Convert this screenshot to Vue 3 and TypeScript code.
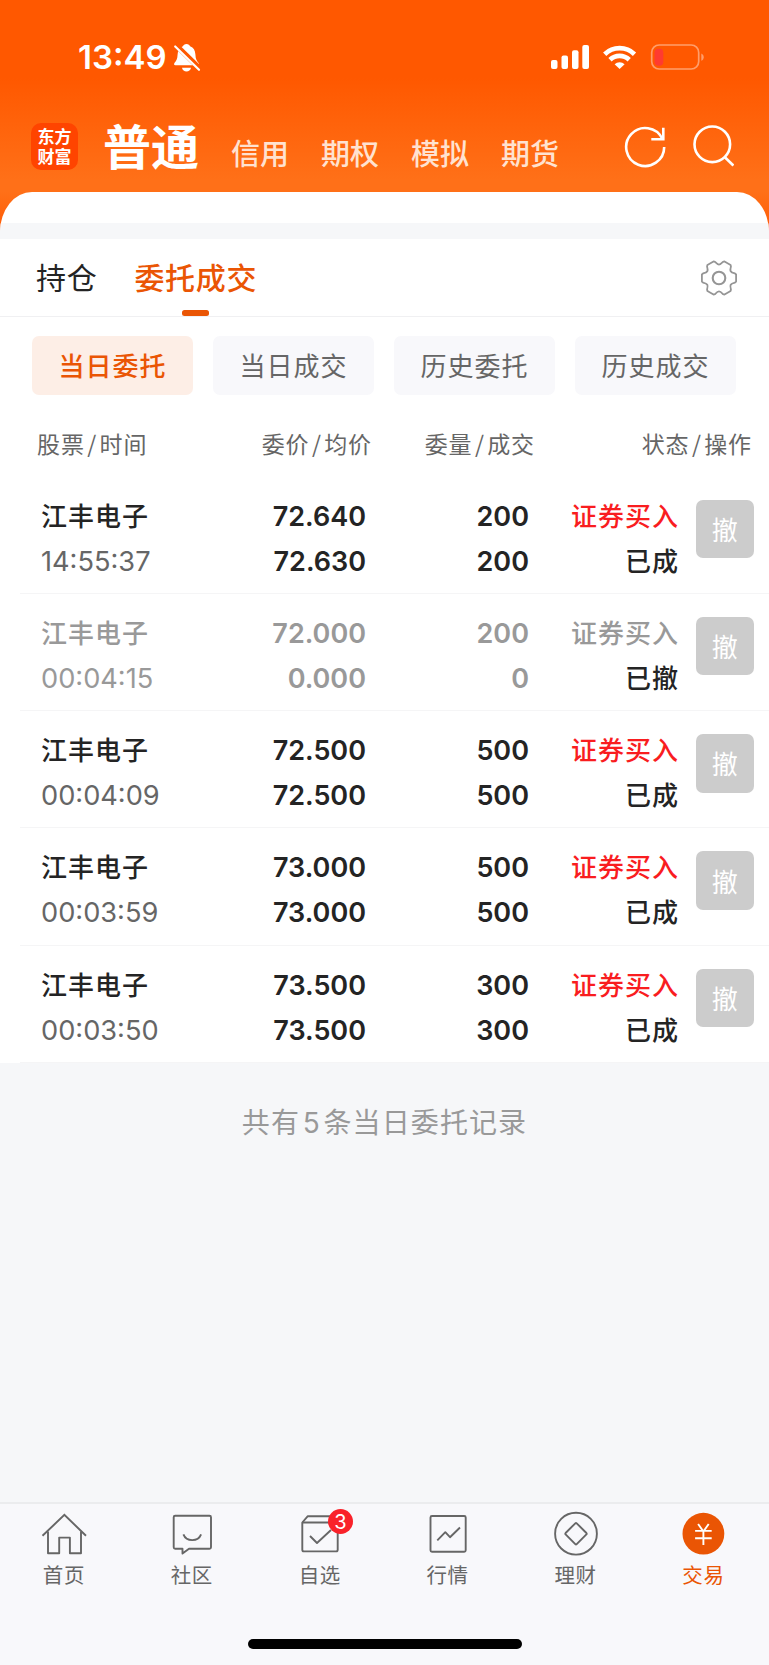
<script setup lang="ts">
interface Order {
  time: string
  price: string
  avg: string
  qty: number
  filled: number
  state: string
  cancelled?: boolean
}

const accounts: string[] = ['信用', '期权', '模拟', '期货']
const filters: string[] = ['当日委托', '当日成交', '历史委托', '历史成交']
const columns: [string, string][] = [
  ['股票', '时间'],
  ['委价', '均价'],
  ['委量', '成交'],
  ['状态', '操作'],
]

const orders: Order[] = [
  { time: '14:55:37', price: '72.640', avg: '72.630', qty: 200, filled: 200, state: '已成' },
  { time: '00:04:15', price: '72.000', avg: '0.000', qty: 200, filled: 0, state: '已撤', cancelled: true },
  { time: '00:04:09', price: '72.500', avg: '72.500', qty: 500, filled: 500, state: '已成' },
  { time: '00:03:59', price: '73.000', avg: '73.000', qty: 500, filled: 500, state: '已成' },
  { time: '00:03:50', price: '73.500', avg: '73.500', qty: 300, filled: 300, state: '已成' },
]

const tabs: { id: string; label: string }[] = [
  { id: 'home', label: '首页' },
  { id: 'community', label: '社区' },
  { id: 'watch', label: '自选' },
  { id: 'market', label: '行情' },
  { id: 'wealth', label: '理财' },
  { id: 'trade', label: '交易' },
]

// Outline of a six-toothed gear centred on the origin.
function gearPath(): string {
  const at = (x: number, y: number, k: number): string => {
    const a = (k * Math.PI) / 3
    const px = x * Math.cos(a) - y * Math.sin(a)
    const py = x * Math.sin(a) + y * Math.cos(a)
    return `${px.toFixed(2)} ${py.toFixed(2)}`
  }
  let d = `M${at(15.9, -4.6, 0)}`
  for (let k = 0; k < 6; k++) {
    d += `L${at(17.1, -3.5, k)}L${at(17.1, 3.5, k)}L${at(15.9, 4.6, k)}`
    d += `C${at(11.2, 5.8, k)} ${at(11.2, -5.8, k + 1)} ${at(15.9, -4.6, k + 1)}`
  }
  return d + 'Z'
}
const gear: string = gearPath()
</script>

<template>
  <div class="screen">
    <header class="hero">
      <div class="status">
        <span class="clock">13:49</span>
        <svg class="bell" width="28" height="30" viewBox="0 0 28 30">
          <path d="M13.5 1C15.4 1 16.7 2 17.1 3.3C20.6 4.5 22.2 7.6 22.4 11.5C22.6 16 23.6 17.9 25.4 19.8C26.4 21 26 22.3 24.6 22.3H2.4C1 22.3.6 21 1.6 19.8C3.4 17.9 4.4 16 4.6 11.5C4.8 7.6 6.4 4.5 9.9 3.3C10.3 2 11.6 1 13.5 1Z" fill="#fff" />
          <path d="M9 24.7H18C17.5 27.3 15.7 28.5 13.5 28.5S9.5 27.3 9 24.7Z" fill="#fff" />
          <path d="M2.6 1.8L28 26.6" stroke="#ff5800" stroke-width="5.2" />
          <path d="M2.2 3.5L26 26.8" stroke="#fff" stroke-width="2.2" stroke-linecap="round" />
        </svg>
        <svg class="signal" width="154" height="30" viewBox="550 42 154 30">
          <g fill="#fff">
            <rect x="551" y="60" width="6.5" height="9" rx="2" />
            <rect x="561.5" y="55.5" width="6.5" height="13.5" rx="2" />
            <rect x="572" y="50.3" width="6.5" height="18.7" rx="2" />
            <rect x="582.3" y="45" width="6.7" height="24" rx="2" />
            <path d="M619.6 69L614.6 64.2A7.4 7.4 0 0 1 624.6 64.2Z" />
          </g>
          <g fill="none" stroke="#fff" stroke-width="4.7">
            <path d="M604.7 54.2A21.5 21.5 0 0 1 634.5 54.2" />
            <path d="M610 59.8A13.8 13.8 0 0 1 629.2 59.8" />
          </g>
          <rect x="651.7" y="45" width="47" height="24" rx="7.5" fill="none" stroke="#ff9e6b" stroke-width="1.7" />
          <rect x="654.5" y="48.7" width="8.8" height="17" rx="4" fill="#ff3b30" />
          <path d="M701.3 53.5C704.5 54.8 704.5 59.5 701.3 60.8Z" fill="#ff9e6b" />
        </svg>
      </div>
      <nav class="accounts">
        <div class="logo"><span>东方</span><span>财富</span></div>
        <strong class="current">普通</strong>
        <span v-for="name in accounts" :key="name" class="account">{{ name }}</span>
        <svg class="tools" width="110" height="46" viewBox="624 124 110 46" fill="none" stroke="#fff" stroke-width="2.6">
          <path d="M664.2 147A19 19 0 1 1 662.3 138.7" />
          <path d="M663.3 127.7V139.3H651.3" />
          <circle cx="712.3" cy="144.3" r="17.8" />
          <path d="M724.6 157L733.4 165.6" />
        </svg>
      </nav>
    </header>

    <main class="sheet">
      <div class="strip"></div>
      <div class="tabs">
        <span class="tab">持仓</span>
        <span class="tab active">委托成交</span>
        <svg class="gear" width="38" height="38" viewBox="-19 -19 38 38" fill="none" stroke="#959595" stroke-width="1.8" stroke-linejoin="round">
          <path :d="gear" />
          <circle r="6.3" stroke-width="2.1" />
        </svg>
      </div>

      <div class="filters">
        <button v-for="(f, i) in filters" :key="f" type="button" class="chip" :class="{ on: i === 0 }">{{ f }}</button>
      </div>

      <div class="grid head">
        <span v-for="c in columns" :key="c[0]">{{ c[0] }}<i>/</i>{{ c[1] }}</span>
      </div>

      <section v-for="o in orders" :key="o.time" class="grid row" :class="{ dim: o.cancelled }">
        <div class="cell stock"><span class="name">江丰电子</span><span class="time">{{ o.time }}</span></div>
        <div class="cell num"><span>{{ o.price }}</span><span>{{ o.avg }}</span></div>
        <div class="cell num"><span>{{ o.qty }}</span><span>{{ o.filled }}</span></div>
        <div class="cell deal"><span class="side">证券买入</span><span class="state">{{ o.state }}</span></div>
        <button type="button" class="cancel">撤</button>
      </section>
    </main>

    <p class="summary">共有<i>5</i>条当日委托记录</p>

    <footer class="dock">
      <a v-for="t in tabs" :key="t.id" class="item" :class="{ selected: t.id === 'trade' }">
        <svg class="icon" width="46" height="46" viewBox="0 0 46 46" fill="none" stroke="#666" stroke-width="1.9" stroke-linejoin="round">
          <template v-if="t.id === 'home'">
            <path d="M1.5 24.7L23.4 3.9L45 24.7" stroke-linejoin="miter" />
            <path d="M7 20.5V42.2H18.2V26.6H28.9V42.2H40V20.5" />
          </template>
          <template v-else-if="t.id === 'community'">
            <path d="M6.2 4.8H40.5Q42 4.8 42 6.3V36.2Q42 37.7 40.5 37.7H20L13.5 42.6V37.7H6.2Q4.7 37.7 4.7 36.2V6.3Q4.7 4.8 6.2 4.8Z" />
            <path d="M14.4 23.3C17.5 31 29 31 32.1 23.3" />
          </template>
          <template v-else-if="t.id === 'watch'">
            <path d="M5.3 11.5L10.6 5.3H35.5L40.7 11.5V38.8Q40.7 40.4 39.1 40.4H6.9Q5.3 40.4 5.3 38.8Z" />
            <path d="M5.3 11.5H40.7" />
            <path d="M13 25L20 32L34 19" />
          </template>
          <template v-else-if="t.id === 'market'">
            <rect x="5.5" y="5" width="35.2" height="35.7" rx="1.5" />
            <path d="M12.3 29.3L20.3 21.2L25 26.2L35 16.5" />
          </template>
          <template v-else-if="t.id === 'wealth'">
            <circle cx="23" cy="22.7" r="20.9" />
            <path d="M23.7 12.3L33.4 22Q34 22.7 33.4 23.4L23.7 33.1Q23 33.8 22.3 33.1L12.6 23.4Q12 22.7 12.6 22L22.3 12.3Q23 11.6 23.7 12.3Z" />
          </template>
          <template v-else>
            <circle cx="23.4" cy="22.7" r="20.9" fill="#ea5504" stroke="none" />
            <path d="M18.1 13L23.4 20.5L28.7 13M23.4 20.5V34M15.1 19.9H31.7M15.1 27.3H31.7" stroke="#fff" />
          </template>
        </svg>
        <span v-if="t.id === 'watch'" class="badge">3</span>
        <span class="label">{{ t.label }}</span>
      </a>
      <div class="indicator"></div>
    </footer>
  </div>
</template>

<style>
body {
  margin: 0;
  background: #f6f7f9;
}
</style>

<style scoped>
.screen {
  width: 769px;
  height: 1665px;
  display: flex;
  flex-direction: column;
  overflow: hidden;
  background: #f6f7f9;
  font-family: "Noto Sans CJK SC", sans-serif;
  color: #242424;
}
.hero {
  height: 232px;
  flex: none;
  box-sizing: border-box;
  background: linear-gradient(#ff5800 0, #ff5800 78px, #ff7018 180px, #ff7018 192px, #ff5a04 232px);
}
.status {
  display: flex;
  height: 117px;
  padding-left: 78px;
  box-sizing: border-box;
}
.clock {
  width: 95px;
  margin-top: 37px;
  font: 600 33px/40px Inter, sans-serif;
  color: #fff;
}
.bell {
  margin-top: 43px;
}
.signal {
  margin: 42px 0 0 349px;
}
.accounts {
  display: flex;
  align-items: flex-start;
  color: #fff;
  white-space: nowrap;
}
.logo {
  width: 47px;
  height: 47px;
  margin: 6px 25px 0 31px;
  box-sizing: border-box;
  padding-top: 3px;
  border-radius: 10px;
  background: #ff4400;
  display: flex;
  flex-direction: column;
  align-items: center;
  font-size: 17px;
  font-weight: 700;
  line-height: 19.5px;
}
.current {
  width: 128px;
  margin-top: -1px;
  font-size: 48px;
  line-height: 56px;
  font-weight: 700;
}
.account {
  width: 90px;
  margin-top: 15px;
  font-size: 29px;
  line-height: 40px;
  font-weight: 500;
  color: #ffe2d0;
}
.tools {
  margin: 7px 0 0 33px;
}
.sheet {
  margin-top: -40px;
  height: 871px;
  flex: none;
  background: #fff;
  border-radius: 32px 32px 0 0 / 40px 40px 0 0;
  overflow: hidden;
}
.strip {
  height: 15.5px;
  margin-top: 31px;
  background: #f6f7f9;
}
.tabs {
  display: flex;
  height: 78px;
  box-sizing: border-box;
  padding: 0 31px 0 36px;
  border-bottom: 1px solid #f0f0f2;
  font-size: 30px;
  letter-spacing: 0.7px;
}
.tab {
  position: relative;
  line-height: 74px;
  margin-right: 37px;
}
.tab.active {
  color: #ea5504;
  font-weight: 500;
}
.tab.active::after {
  content: "";
  position: absolute;
  left: 48px;
  bottom: 0;
  width: 27px;
  height: 5.5px;
  border-radius: 2.5px;
  background: #ea5504;
}
.gear {
  margin: 20px 0 0 auto;
}
.filters {
  display: flex;
  gap: 20px;
  padding: 19.5px 33px 0 32px;
}
.chip {
  flex: 1;
  height: 59px;
  padding: 0 0 2px;
  border: 0;
  border-radius: 7px;
  background: #f8f8fb;
  font: 400 26px/57px "Noto Sans CJK SC", sans-serif;
  letter-spacing: 1px;
  color: #666;
}
.chip.on {
  background: #fdeee6;
  color: #ea5504;
  font-weight: 500;
}
.grid {
  display: grid;
  grid-template-columns: 200px 152px 163px 150px 1fr;
}
.head {
  height: 81.5px;
  padding: 0 17px 0 20px;
  grid-template-columns: 200px 152px 163px 1fr;
  font-size: 23px;
  letter-spacing: 0.9px;
  line-height: 96px;
  color: #666;
  text-align: right;
}
.head i {
  padding: 0 2.4px;
  font-style: normal;
}
.head span:first-child {
  text-align: left;
  padding-left: 17px;
}
.row {
  height: 117.3px;
  box-sizing: border-box;
  margin-left: 20px;
  border-bottom: 1.5px solid #f5f5f6;
}
.cell {
  display: flex;
  flex-direction: column;
  padding-top: 17px;
  line-height: 45px;
  text-align: right;
}
.stock {
  text-align: left;
  padding-left: 21px;
}
.name,
.deal {
  font-size: 26px;
  font-weight: 500;
  letter-spacing: 1px;
}
.name {
  margin: -2px 0 2px;
}
.deal {
  padding-top: 15px;
  padding-right: 6px;
}
.time {
  font: 400 27.2px/45px Inter, sans-serif;
  color: #666;
}
.num {
  font: 600 27px/45px Inter, sans-serif;
  padding-right: 6px;
}
.side {
  color: #f91d1f;
}
.dim .stock,
.dim .time,
.dim .num,
.dim .side {
  color: #999;
}
.cancel {
  width: 58.5px;
  height: 58.5px;
  margin: 23px 0 0 10.5px;
  padding: 0 0 1px;
  border: 0;
  border-radius: 7px;
  background: #ccc;
  color: #fff;
  font: 400 26px/57px "Noto Sans CJK SC", sans-serif;
}
.summary {
  margin: 37px 0 0;
  font-size: 28px;
  letter-spacing: 1.1px;
  line-height: 42px;
  text-align: center;
  color: #999;
}
.summary i {
  font-family: Inter, sans-serif;
  font-style: normal;
  padding: 0 2.7px;
}
.dock {
  display: grid;
  grid-template-columns: repeat(6, 127.9px);
  height: 163px;
  margin-top: auto;
  box-sizing: border-box;
  border-top: 2px solid #ebecee;
  background: #f8f8fb;
  align-content: start;
}
.item {
  position: relative;
  display: flex;
  flex-direction: column;
  align-items: center;
  padding-top: 7px;
}
.label {
  font-size: 20.5px;
  letter-spacing: 0.6px;
  line-height: 34px;
  color: #666;
}
.selected .label {
  color: #ea5504;
}
.badge {
  position: absolute;
  left: 72px;
  top: 4.5px;
  width: 25.5px;
  height: 25.5px;
  border-radius: 50%;
  background: #f9222a;
  color: #fff;
  font: 400 20px/26px Inter, sans-serif;
  text-align: center;
}
.indicator {
  grid-column: 1 / -1;
  width: 274px;
  height: 10px;
  margin: 48px 0 0 247.5px;
  border-radius: 5px;
  background: #000;
}
</style>
